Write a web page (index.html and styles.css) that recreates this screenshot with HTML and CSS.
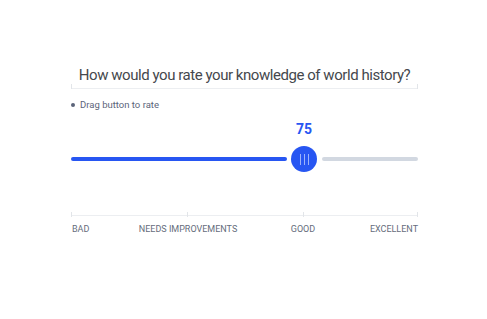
FILE: index.html
```html
<!DOCTYPE html>
<html>
<head>
<meta charset="utf-8">
<link rel="stylesheet" href="styles.css">
</head>
<body>
<div class="rating">
  <div class="question">How would you rate your knowledge of world history?</div>
  <div class="hint"><span class="dot"></span>Drag button to rate</div>
  <div class="value">75</div>
  <div class="slider">
    <div class="fill"></div>
    <div class="knob"><span></span><span></span><span></span></div>
    <div class="rest"></div>
  </div>
  <div class="scale">
    <span class="tick t0"></span><span class="tick t1"></span><span class="tick t2"></span><span class="tick t3"></span>
  </div>
  <div class="labels">
    <span class="lbl bad">BAD</span>
    <span class="lbl needs">NEEDS IMPROVEMENTS</span>
    <span class="lbl good">GOOD</span>
    <span class="lbl exc">EXCELLENT</span>
  </div>
</div>
</body>
</html>
```
FILE: styles.css
```css
html, body { margin: 0; padding: 0; background: #fff; }
body { font-family: Roboto, "Noto Sans", sans-serif; }
.rating {
  width: 347px;
  margin: 0 0 0 71px;
  padding-top: 65px;
  display: flex;
  flex-direction: column;
}
.question {
  font-size: 15px;
  letter-spacing: -0.45px;
  line-height: 20px;
  color: #45484d;
  text-align: center;
  white-space: nowrap;
  padding-bottom: 3px;
  border-bottom: 1px solid #eceef1;
  position: relative;
}
.question::before, .question::after {
  content: "";
  position: absolute;
  bottom: -1px;
  width: 1px;
  height: 5px;
  background: #e2e5e9;
}
.question::before { left: 0; }
.question::after { right: 0; }
.hint {
  margin-top: 10px;
  display: flex;
  align-items: center;
  font-size: 9.5px;
  line-height: 12px;
  color: #5b6479;
}
.dot {
  width: 4px; height: 4px; border-radius: 50%;
  background: #5b6479;
  margin: 0 5px 0 0;
}
.value {
  margin-top: 10px;
  margin-left: 223px;
  width: 20px;
  text-align: center;
  font-size: 14px;
  font-weight: 700;
  line-height: 16px;
  color: #2756f2;
}
.slider {
  margin-top: 9px;
  height: 26px;
  display: flex;
  align-items: center;
}
.fill {
  width: 216px;
  height: 4px;
  border-radius: 2px;
  background: #2756f2;
}
.knob {
  width: 26px; height: 26px;
  border-radius: 50%;
  background: #2756f2;
  margin: 0 5px 0 4px;
  display: flex;
  align-items: center;
  justify-content: center;
  gap: 3px;
}
.knob span {
  width: 1px;
  height: 11px;
  background: #9db3fa;
}
.rest {
  flex: 1;
  height: 4px;
  border-radius: 2px;
  background: #d2d8e1;
}
.scale {
  margin-top: 43px;
  height: 1px;
  background: #eceef1;
  position: relative;
}
.tick {
  position: absolute;
  top: -3px;
  width: 1px;
  height: 5px;
  background: #e2e5e9;
}
.t0 { left: 0; }
.t1 { left: 116px; }
.t2 { left: 232px; }
.t3 { right: 0; }
.labels {
  margin-top: 7px;
  position: relative;
  height: 12px;
  font-size: 9px;
  line-height: 12px;
  color: #656d7c;
}
.lbl { position: absolute; top: 0; white-space: nowrap; }
.bad { left: 1px; }
.needs { left: 117px; transform: translateX(-50%); }
.good { left: 232px; transform: translateX(-50%); }
.exc { right: 0; }
```
